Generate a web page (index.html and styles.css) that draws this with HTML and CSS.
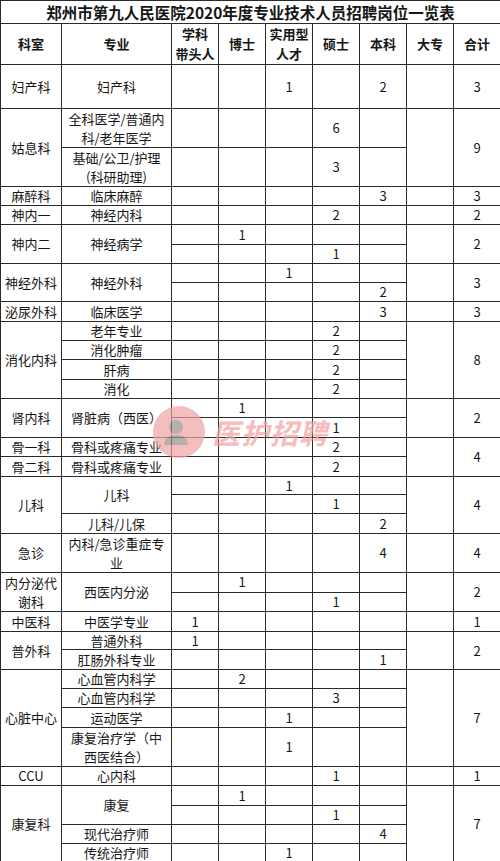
FILE: index.html
```html
<!DOCTYPE html>
<html lang="zh-CN">
<head>
<meta charset="utf-8">
<title>郑州市第九人民医院2020年度专业技术人员招聘岗位一览表</title>
<link rel="stylesheet" href="styles.css">
</head>
<body>
<div class="page">
<table class="grid">
<colgroup>
<col class="c-dept"><col class="c-major"><col class="c-num"><col class="c-num"><col class="c-num"><col class="c-num"><col class="c-num"><col class="c-num"><col class="c-num">
</colgroup>
<tbody>
<tr class="h23"><td class="title" colspan="9">郑州市第九人民医院2020年度专业技术人员招聘岗位一览表</td></tr>
<tr class="h41"><th>科室</th><th>专业</th><th>学科<br>带头人</th><th>博士</th><th>实用型<br>人才</th><th>硕士</th><th>本科</th><th>大专</th><th>合计</th></tr>
<tr class="h44"><td>妇产科</td><td>妇产科</td><td></td><td></td><td>1</td><td></td><td>2</td><td></td><td>3</td></tr>
<tr class="h39"><td rowspan="2">姑息科</td><td class="wrap">全科医学/普通内<br>科/老年医学</td><td></td><td></td><td></td><td>6</td><td></td><td rowspan="2"></td><td rowspan="2">9</td></tr>
<tr class="h39"><td class="wrap">基础/公卫/护理<br>(科研助理)</td><td></td><td></td><td></td><td>3</td><td></td></tr>
<tr class="h19"><td>麻醉科</td><td>临床麻醉</td><td></td><td></td><td></td><td></td><td>3</td><td></td><td>3</td></tr>
<tr class="h19"><td>神内一</td><td>神经内科</td><td></td><td></td><td></td><td>2</td><td></td><td></td><td>2</td></tr>
<tr class="h20"><td rowspan="2">神内二</td><td rowspan="2">神经病学</td><td></td><td>1</td><td></td><td></td><td></td><td rowspan="2"></td><td rowspan="2">2</td></tr>
<tr class="h19"><td></td><td></td><td></td><td>1</td><td></td></tr>
<tr class="h19"><td rowspan="2">神经外科</td><td rowspan="2">神经外科</td><td></td><td></td><td>1</td><td></td><td></td><td rowspan="2"></td><td rowspan="2">3</td></tr>
<tr class="h19"><td></td><td></td><td></td><td></td><td>2</td></tr>
<tr class="h20"><td>泌尿外科</td><td>临床医学</td><td></td><td></td><td></td><td></td><td>3</td><td></td><td>3</td></tr>
<tr class="h19"><td rowspan="4">消化内科</td><td>老年专业</td><td></td><td></td><td></td><td>2</td><td></td><td rowspan="4"></td><td rowspan="4">8</td></tr>
<tr class="h19"><td>消化肿瘤</td><td></td><td></td><td></td><td>2</td><td></td></tr>
<tr class="h20"><td>肝病</td><td></td><td></td><td></td><td>2</td><td></td></tr>
<tr class="h19"><td>消化</td><td></td><td></td><td></td><td>2</td><td></td></tr>
<tr class="h19"><td rowspan="2">肾内科</td><td rowspan="2">肾脏病（西医）</td><td></td><td>1</td><td></td><td></td><td></td><td rowspan="2"></td><td rowspan="2">2</td></tr>
<tr class="h20"><td></td><td></td><td></td><td>1</td><td></td></tr>
<tr class="h19"><td>骨一科</td><td>骨科或疼痛专业</td><td></td><td></td><td></td><td>2</td><td></td><td rowspan="2"></td><td rowspan="2">4</td></tr>
<tr class="h20"><td>骨二科</td><td>骨科或疼痛专业</td><td></td><td></td><td></td><td>2</td><td></td></tr>
<tr class="h18"><td rowspan="3">儿科</td><td rowspan="2">儿科</td><td></td><td></td><td>1</td><td></td><td></td><td rowspan="3"></td><td rowspan="3">4</td></tr>
<tr class="h19"><td></td><td></td><td></td><td>1</td><td></td></tr>
<tr class="h20"><td>儿科/儿保</td><td></td><td></td><td></td><td></td><td>2</td></tr>
<tr class="h39"><td>急诊</td><td class="wrap">内科/急诊重症专<br>业</td><td></td><td></td><td></td><td></td><td>4</td><td></td><td>4</td></tr>
<tr class="h19"><td rowspan="2" class="wrap">内分泌代<br>谢科</td><td rowspan="2">西医内分泌</td><td></td><td>1</td><td></td><td></td><td></td><td rowspan="2"></td><td rowspan="2">2</td></tr>
<tr class="h19"><td></td><td></td><td></td><td>1</td><td></td></tr>
<tr class="h20"><td>中医科</td><td>中医学专业</td><td>1</td><td></td><td></td><td></td><td></td><td></td><td>1</td></tr>
<tr class="h18"><td rowspan="2">普外科</td><td>普通外科</td><td>1</td><td></td><td></td><td></td><td></td><td rowspan="2"></td><td rowspan="2">2</td></tr>
<tr class="h20"><td>肛肠外科专业</td><td></td><td></td><td></td><td></td><td>1</td></tr>
<tr class="h19"><td rowspan="4">心脏中心</td><td>心血管内科学</td><td></td><td>2</td><td></td><td></td><td></td><td rowspan="4"></td><td rowspan="4">7</td></tr>
<tr class="h19"><td>心血管内科学</td><td></td><td></td><td></td><td>3</td><td></td></tr>
<tr class="h20"><td>运动医学</td><td></td><td></td><td>1</td><td></td><td></td></tr>
<tr class="h38"><td class="wrap">康复治疗学（中<br>西医结合）</td><td></td><td></td><td>1</td><td></td><td></td></tr>
<tr class="h19"><td>CCU</td><td>心内科</td><td></td><td></td><td></td><td>1</td><td></td><td></td><td>1</td></tr>
<tr class="h20"><td rowspan="4">康复科</td><td rowspan="2">康复</td><td></td><td>1</td><td></td><td></td><td></td><td rowspan="4"></td><td rowspan="4">7</td></tr>
<tr class="h19"><td></td><td></td><td></td><td>1</td><td></td></tr>
<tr class="h19"><td>现代治疗师</td><td></td><td></td><td></td><td></td><td>4</td></tr>
<tr class="h19"><td>传统治疗师</td><td></td><td></td><td>1</td><td></td><td></td></tr>
</tbody>
</table>
<div class="watermark">
<svg class="wm-logo" viewBox="0 0 54 54" width="54" height="54">
<circle cx="27" cy="27" r="26" fill="#f2a3a3"/>
<circle cx="24" cy="22" r="7" fill="#9a8c8c"/>
<path d="M12 40 C13 32 18 30 24 30 C30 30 35 32 36 40 Z" fill="#9a8c8c"/>
</svg>
<span class="wm-text">医护招聘</span>
</div>
</div>
</body>
</html>
```
FILE: styles.css
```css
html, body {
  margin: 0;
  padding: 0;
  background: #ffffff;
}
body {
  font-family: "Noto Sans CJK SC", "Noto Sans", sans-serif;
  color: #161616;
}
.page {
  position: relative;
  width: 500px;
}
.grid {
  border-collapse: collapse;
  table-layout: fixed;
  width: 500px;
}
.c-dept { width: 61px; }
.c-major { width: 110px; }
.c-num { width: 47px; }
.grid td,
.grid th {
  border: 1px solid #2a2a2a;
  padding: 0;
  text-align: center;
  vertical-align: middle;
  font-size: 13px;
  line-height: 16px;
  font-weight: 400;
  white-space: nowrap;
  overflow: hidden;
}
.grid th {
  font-weight: 700;
  line-height: 20px;
}
.grid td.title {
  font-size: 15.5px;
  font-weight: 700;
  line-height: 20px;
}
.grid td.wrap {
  line-height: 19px;
}
.h18 { height: 18px; }
.h19 { height: 19px; }
.h20 { height: 20px; }
.h23 { height: 23px; }
.h38 { height: 38px; }
.h39 { height: 39px; }
.h41 { height: 41px; }
.h44 { height: 44px; }
.watermark {
  position: absolute;
  left: 152px;
  top: 405px;
  display: flex;
  align-items: center;
  gap: 6px;
  opacity: 0.7;
  pointer-events: none;
}
.wm-logo {
  display: block;
}
.wm-text {
  font-size: 28px;
  font-weight: 700;
  font-style: italic;
  color: #f3a0a0;
  letter-spacing: 1px;
}
```
